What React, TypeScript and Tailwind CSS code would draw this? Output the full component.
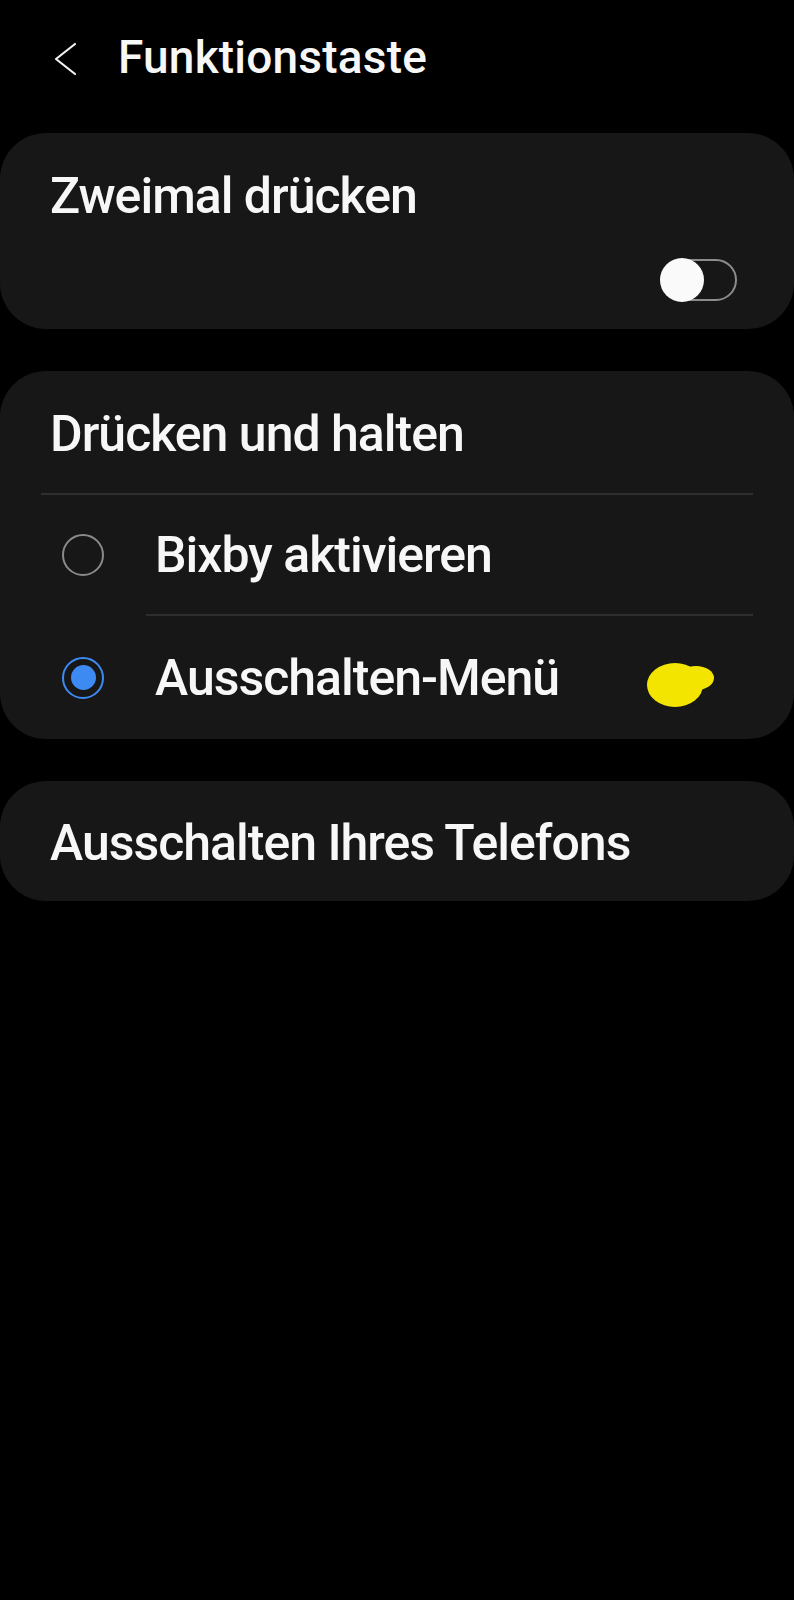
import React from "react";

const font = { fontFamily: "Roboto, 'Noto Sans', sans-serif" };

function Radio({ checked }: { checked: boolean }) {
  return checked ? (
    <div className="w-[42px] h-[42px] rounded-full border-[2px] border-[#3d8bf2] flex items-center justify-center shrink-0">
      <div className="w-[25px] h-[25px] rounded-full bg-[#3d8bf2]" />
    </div>
  ) : (
    <div className="w-[42px] h-[42px] rounded-full border-[2px] border-[#8a8a8a] shrink-0" />
  );
}

export default function App() {
  return (
    <div className="w-[794px] min-h-[1600px] bg-black text-[#f7f7f7] antialiased" style={font}>
      {/* Header */}
      <div className="h-[133px] flex items-start pl-[53px]">
        <svg width="26" height="34" viewBox="0 0 26 34" className="mt-[42px] shrink-0" fill="none">
          <polyline points="22,2 3,17 22,32" stroke="#f2f2f2" strokeWidth="2.2" strokeLinecap="round" strokeLinejoin="round" />
        </svg>
        <div className="ml-[39px] mt-[34px] text-[46px] leading-[46px] font-medium tracking-[0.2px]">Funktionstaste</div>
      </div>

      {/* Card 1 */}
      <div className="bg-[#171717] rounded-[46px] pt-[38px] pb-[28px]">
        <div className="pl-[50px] text-[50px] leading-[50px] font-medium tracking-[-1px]">Zweimal drücken</div>
        <div className="flex justify-end pr-[57px] mt-[38px]">
          <div className="relative w-[75px] h-[42px] rounded-full border-[2px] border-[#8c8c8c]">
            <div className="absolute left-[-4px] top-[-3px] w-[44px] h-[44px] rounded-full bg-[#fafafa]" />
          </div>
        </div>
      </div>

      {/* Card 2 */}
      <div className="mt-[42px] bg-[#171717] rounded-[46px] pt-[38px]">
        <div className="pl-[50px] text-[50px] leading-[50px] font-medium tracking-[-1px]">Drücken und halten</div>
        <div className="mt-[34px] mx-[41px] h-[2px] bg-[#2e2e2e]" />
        <div className="h-[119px] flex items-center pl-[62px]">
          <Radio checked={false} />
          <div className="ml-[51px] text-[50px] leading-[50px] font-medium tracking-[-1px]">Bixby aktivieren</div>
        </div>
        <div className="ml-[146px] mr-[41px] h-[2px] bg-[#2e2e2e]" />
        <div className="relative h-[123px] flex items-center pl-[62px]">
          <Radio checked={true} />
          <div className="ml-[51px] text-[50px] leading-[50px] font-medium tracking-[-1px]">Ausschalten-Menü</div>
          <svg className="absolute left-[646px] top-[43px]" width="70" height="48" viewBox="0 0 70 48">
            <ellipse cx="29" cy="26" rx="28" ry="22" fill="#f3e500" />
            <ellipse cx="50" cy="19" rx="18" ry="12" fill="#f3e500" />
          </svg>
        </div>
      </div>

      {/* Card 3 */}
      <div className="mt-[42px] bg-[#171717] rounded-[46px] pt-[37px] pb-[33px]">
        <div className="pl-[50px] text-[50px] leading-[50px] font-medium tracking-[-1px]">Ausschalten Ihres Telefons</div>
      </div>
    </div>
  );
}
